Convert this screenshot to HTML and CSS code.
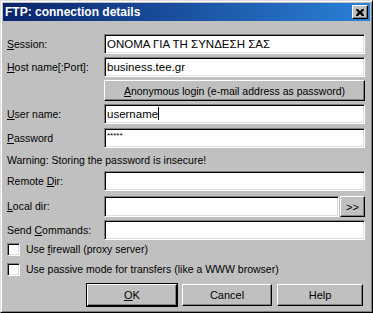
FILE: index.html
```html
<!DOCTYPE html>
<html lang="en">
<head>
  <meta charset="UTF-8" />
  <title>FTP: connection details</title>
  <link rel="stylesheet" href="styles.css">
</head>
<body>

  <div class="window">
    <div class="titlebar">
      <span class="title">FTP: connection details</span>
      <div class="close">
        <svg width="8" height="7" viewBox="0 0 8 7">
          <path d="M0 0h2l2 2 2-2h2v1l-2 2.5 2 2.5v1h-2l-2-2-2 2h-2v-1l2-2.5-2-2.5z" fill="#000"/>
        </svg>
      </div>
    </div>

    <div class="content">
      <div class="row r20">
        <label><u>S</u>ession:</label>
        <div class="field">ONOMA ΓΙΑ ΤΗ ΣΥΝΔΕΣΗ ΣΑΣ</div>
      </div>
      <div class="row r20">
        <label><u>H</u>ost name[:Port]:</label>
        <div class="field">business.tee.gr</div>
      </div>
      <div class="row r21">
        <span></span>
        <div class="btn wide"><span><u>A</u>nonymous login (e-mail address as password)</span></div>
      </div>
      <div class="row r21">
        <label><u>U</u>ser name:</label>
        <div class="field">username<span class="caret"></span></div>
      </div>
      <div class="row r21">
        <label><u>P</u>assword</label>
        <div class="field stars">*****</div>
      </div>
      <div class="warning">Warning: Storing the password is insecure!</div>
      <div class="row r22">
        <label>Remote <u>D</u>ir:</label>
        <div class="field"></div>
      </div>
      <div class="row r21">
        <label><u>L</u>ocal dir:</label>
        <div class="field-group">
          <div class="field"></div>
          <div class="btn small">&gt;&gt;</div>
        </div>
      </div>
      <div class="row r20">
        <label>Send <u>C</u>ommands:</label>
        <div class="field"></div>
      </div>
      <div class="check c1"><span class="box"></span><span>Use <u>f</u>irewall (proxy server)</span></div>
      <div class="check c2"><span class="box"></span><span>Use passive mode for transfers (like a WWW browser)</span></div>
      <div class="buttons">
        <div class="btn default"><span><u>O</u>K</span></div>
        <div class="btn">Cancel</div>
        <div class="btn help">Help</div>
      </div>
    </div>
  </div>

</body>
</html>
```

FILE: styles.css
```css
html, body {
  margin: 0;
  padding: 0;
}
body {
  font-family: "Liberation Sans", Arial, sans-serif;
  font-size: 10.5px;
  color: #000;
  background: #c0c0c0;
}
.window {
  width: 373px;
  height: 313px;
  box-sizing: border-box;
  background: #c0c0c0;
  border-top: 1px solid #dfdfdf;
  border-left: 1px solid #dfdfdf;
  border-right: 1px solid #000;
  border-bottom: 1px solid #000;
  box-shadow: inset 1px 1px 0 #fff, inset -1px -1px 0 #808080;
  padding: 2px;
}
.titlebar {
  height: 18px;
  display: flex;
  align-items: center;
  justify-content: space-between;
  background: linear-gradient(to right, #0a246a, #2a80d8);
  padding: 0 2px 0 2px;
}
.title {
  color: #fff;
  font-weight: bold;
  font-size: 12px;
}
.close {
  width: 16px;
  height: 14px;
  box-sizing: border-box;
  background: #c0c0c0;
  border-top: 1px solid #fff;
  border-left: 1px solid #fff;
  border-right: 1px solid #000;
  border-bottom: 1px solid #000;
  box-shadow: inset -1px -1px 0 #808080;
  display: flex;
  align-items: center;
  justify-content: center;
}
.content {
  padding: 13px 5px 0 4px;
  display: flex;
  flex-direction: column;
  gap: 3px;
}
.row {
  display: grid;
  grid-template-columns: 97px 1fr;
  align-items: start;
}
.r20 { height: 20px; }
.r21 { height: 21px; }
.r22 { height: 22px; }
.row label {
  line-height: 20px;
}
.field {
  height: 20px;
  box-sizing: border-box;
  background: #fff;
  border-top: 1px solid #808080;
  border-left: 1px solid #808080;
  border-right: 1px solid #fff;
  border-bottom: 1px solid #fff;
  box-shadow: inset 1px 1px 0 #000, inset -1px -1px 0 #dfdfdf;
  padding: 0 2px;
  font-size: 11.5px;
  line-height: 18px;
  white-space: nowrap;
  overflow: hidden;
}
.stars {
  font-size: 8px;
  line-height: 14px;
}
.caret {
  display: inline-block;
  width: 1px;
  height: 13px;
  background: #000;
  vertical-align: -2px;
}
.field-group {
  display: flex;
}
.field-group .field {
  flex: 1;
  height: 21px;
}
.btn {
  box-sizing: border-box;
  background: #c0c0c0;
  border-top: 1px solid #fff;
  border-left: 1px solid #fff;
  border-right: 1px solid #000;
  border-bottom: 1px solid #000;
  box-shadow: inset -1px -1px 0 #808080;
  display: flex;
  align-items: center;
  justify-content: center;
  font-size: 11px;
}
.btn.wide {
  height: 21px;
  font-size: 10.5px;
}
.btn.small {
  width: 25px;
  height: 21px;
  margin-left: 1px;
}
.warning {
  height: 16px;
  line-height: 16px;
}
.check {
  display: flex;
  line-height: 13px;
}
.c1 { height: 17px; }
.c2 { height: 18px; }
.box {
  width: 13px;
  height: 13px;
  box-sizing: border-box;
  background: #fff;
  border-top: 1px solid #808080;
  border-left: 1px solid #808080;
  border-right: 1px solid #fff;
  border-bottom: 1px solid #fff;
  box-shadow: inset 1px 1px 0 #000, inset -1px -1px 0 #dfdfdf;
  margin-right: 6px;
}
.buttons {
  display: flex;
  justify-content: flex-end;
  gap: 5px;
  padding-right: 2px;
}
.buttons .btn {
  width: 90px;
  height: 22px;
}
.buttons .btn.help {
  width: 86px;
}
.btn.default {
  outline: 1px solid #000;
}
```
